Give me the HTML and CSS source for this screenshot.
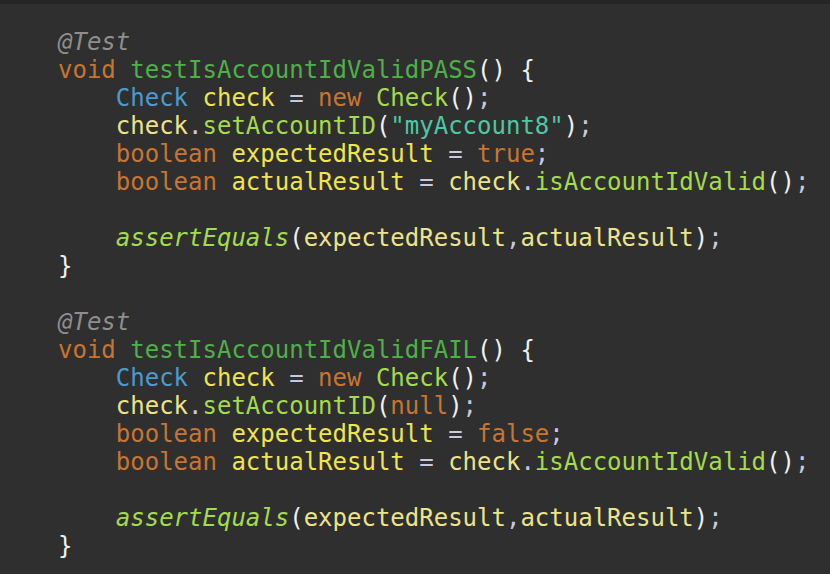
FILE: index.html
```html
<!DOCTYPE html>
<html>
<head>
<meta charset="utf-8">
<link rel="stylesheet" href="styles.css">
</head>
<body>
<div class="topbar"></div>
<pre class="code"><span class="ann">@Test</span>
<span class="kw">void</span> <span class="fn">testIsAccountIdValidPASS</span><span class="p">()</span> <span class="p">{</span>
    <span class="ty">Check</span> <span class="var">check</span> <span class="op">=</span> <span class="kw">new</span> <span class="call">Check</span><span class="p">()</span><span class="op">;</span>
    <span class="ref">check</span><span class="op">.</span><span class="call">setAccountID</span><span class="p">(</span><span class="str">"myAccount8"</span><span class="p">)</span><span class="op">;</span>
    <span class="kw">boolean</span> <span class="var">expectedResult</span> <span class="op">=</span> <span class="kw">true</span><span class="op">;</span>
    <span class="kw">boolean</span> <span class="var">actualResult</span> <span class="op">=</span> <span class="ref">check</span><span class="op">.</span><span class="call">isAccountIdValid</span><span class="p">()</span><span class="op">;</span>

    <span class="st">assertEquals</span><span class="p">(</span><span class="ref">expectedResult</span><span class="op">,</span><span class="ref">actualResult</span><span class="p">)</span><span class="op">;</span>
<span class="p">}</span>

<span class="ann">@Test</span>
<span class="kw">void</span> <span class="fn">testIsAccountIdValidFAIL</span><span class="p">()</span> <span class="p">{</span>
    <span class="ty">Check</span> <span class="var">check</span> <span class="op">=</span> <span class="kw">new</span> <span class="call">Check</span><span class="p">()</span><span class="op">;</span>
    <span class="ref">check</span><span class="op">.</span><span class="call">setAccountID</span><span class="p">(</span><span class="kw">null</span><span class="p">)</span><span class="op">;</span>
    <span class="kw">boolean</span> <span class="var">expectedResult</span> <span class="op">=</span> <span class="kw">false</span><span class="op">;</span>
    <span class="kw">boolean</span> <span class="var">actualResult</span> <span class="op">=</span> <span class="ref">check</span><span class="op">.</span><span class="call">isAccountIdValid</span><span class="p">()</span><span class="op">;</span>

    <span class="st">assertEquals</span><span class="p">(</span><span class="ref">expectedResult</span><span class="op">,</span><span class="ref">actualResult</span><span class="p">)</span><span class="op">;</span>
<span class="p">}</span></pre>
</body>
</html>
```
FILE: styles.css
```css
html, body {
  margin: 0;
  padding: 0;
  background: #2f2f2f;
  height: 100%;
  overflow: hidden;
}
.topbar {
  height: 4px;
  background: #262626;
}
.code {
  margin: 0;
  padding: 24px 0 0 58px;
  font-family: "DejaVu Sans Mono", monospace;
  font-size: 24px;
  line-height: 28px;
  color: #e8e8e8;
}
.ann { color: #8e8e8e; font-style: italic; }
.kw { color: #c87532; }
.fn { color: #4fb04a; }
.ty { color: #4a9bd0; }
.var { color: #f0e54a; }
.ref { color: #ece38c; }
.call { color: #a4dc4c; }
.str { color: #4fc7a4; }
.st { color: #a4dc4c; font-style: italic; }
.p { color: #f0f0f0; }
.op { color: #c9c9de; }
```
